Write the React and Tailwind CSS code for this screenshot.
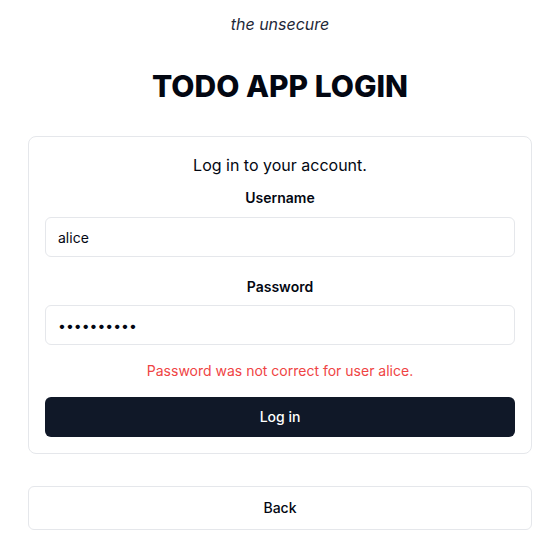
import React from 'react';

const App = () => {
  return (
    <div className="min-h-screen bg-white pl-7 pr-5 pt-3 font-['Inter',sans-serif] text-gray-950">
      <p className="text-center text-base italic leading-6 text-gray-800">the unsecure</p>
      <h1 className="mt-8 text-center text-3xl font-extrabold leading-9">TODO APP LOGIN</h1>

      <form
        onSubmit={e => e.preventDefault()}
        className="mt-8 flex flex-col rounded-lg border border-gray-200 p-4"
      >
        <p className="text-center text-base leading-6">Log in to your account.</p>

        <label htmlFor="username" className="mt-[11px] text-center text-sm font-semibold leading-5">Username</label>
        <input
          id="username"
          type="text"
          defaultValue="alice"
          className="mt-[9px] h-10 rounded-md border border-gray-200 px-3 text-sm outline-none"
        />

        <label htmlFor="password" className="mt-5 text-center text-sm font-semibold leading-5">Password</label>
        <input
          id="password"
          type="password"
          defaultValue="**********"
          className="mt-2 h-10 rounded-md border border-gray-200 px-3 text-sm outline-none"
        />

        <p className="mt-4 text-center text-sm leading-5 text-[#ef4444]">Password was not correct for user alice.</p>

        <button type="submit" className="mt-4 h-10 rounded-md bg-gray-900 text-sm font-medium text-white">
          Log in
        </button>
      </form>

      <button type="button" className="mt-8 h-11 w-full rounded-md border border-gray-200 text-sm font-medium">
        Back
      </button>
    </div>
  );
};

export default App;
